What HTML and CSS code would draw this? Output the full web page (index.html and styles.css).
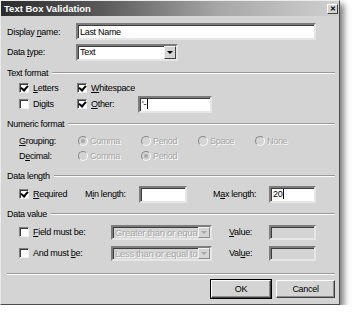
FILE: index.html
```html
<!DOCTYPE html>
<html lang="en">
  <head>
    <meta charset="UTF-8" />
    <title>Text Box Validation</title>
    <link rel="stylesheet" href="styles.css">
  </head>
  <body>
    <div class="dialog">
      <div class="titlebar">
        <span class="title">Text Box Validation</span>
        <span class="close">&#x2715;</span>
      </div>

      <div class="content">
        <div class="row r-name">
          <span class="lbl w-main">Display <u>n</u>ame:</span>
          <span class="field w-name">Last Name</span>
        </div>
        <div class="row r-type">
          <span class="lbl w-main">Data <u>t</u>ype:</span>
          <span class="field select w-type">Text<span class="arrow"></span></span>
        </div>

        <div class="group g-text"><span>Text format</span><span class="line"></span></div>
        <div class="row sub h16">
          <span class="opt w-c1"><span class="check on"></span><span><u>L</u>etters</span></span>
          <span class="opt"><span class="check on"></span><span><u>W</u>hitespace</span></span>
        </div>
        <div class="row sub h16">
          <span class="opt w-c1"><span class="check"></span><span>Di<u>g</u>its</span></span>
          <span class="opt w-other"><span class="check on"></span><span><u>O</u>ther:</span></span>
          <span class="field w-oth">'-<span class="caret"></span></span>
        </div>

        <div class="group g-num"><span>Numeric format</span><span class="line"></span></div>
        <div class="row sub h16 r-group">
          <span class="lbl w-rl"><u>G</u>rouping:</span>
          <span class="opt dis w-r1"><span class="radio on"></span><span>Comma</span></span>
          <span class="opt dis w-r2"><span class="radio"></span><span>Period</span></span>
          <span class="opt dis w-r2"><span class="radio"></span><span>Space</span></span>
          <span class="opt dis"><span class="radio"></span><span>None</span></span>
        </div>
        <div class="row sub h14">
          <span class="lbl w-rl">D<u>e</u>cimal:</span>
          <span class="opt dis w-r1"><span class="radio"></span><span>Comma</span></span>
          <span class="opt dis w-r2"><span class="radio on"></span><span>Period</span></span>
        </div>

        <div class="group g-len"><span>Data length</span><span class="line"></span></div>
        <div class="row sub h18 r-req">
          <span class="opt w-req"><span class="check on"></span><span><u>R</u>equired</span></span>
          <span class="lbl w-min">M<u>i</u>n length:</span>
          <span class="field w-minf"></span>
          <span class="lbl w-max">M<u>a</u>x length:</span>
          <span class="field w-small">20<span class="caret"></span></span>
        </div>

        <div class="group g-val"><span>Data value</span><span class="line"></span></div>
        <div class="row sub h18 r-field">
          <span class="opt w-fld"><span class="check"></span><span><u>F</u>ield must be:</span></span>
          <span class="field select off w-sel">Greater than or equal to<span class="arrow"></span></span>
          <span class="lbl w-value"><u>V</u>alue:</span>
          <span class="field off w-small"></span>
        </div>
        <div class="row sub h18 r-and">
          <span class="opt w-fld"><span class="check"></span><span>And must <u>b</u>e:</span></span>
          <span class="field select off w-sel">Less than or equal to<span class="arrow"></span></span>
          <span class="lbl w-value">Val<u>u</u>e:</span>
          <span class="field off w-small"></span>
        </div>

        <div class="separator"></div>

        <div class="buttons">
          <span class="btn default">OK</span>
          <span class="btn">Cancel</span>
        </div>
      </div>
    </div>
  </body>
</html>
```

FILE: styles.css
```css
  :root {
    --face: #d4d4d4;
    --shadow: #8c8c8c;
    --dark: #424242;
    --muted: #a6a6a6;
  }

  body {
    margin: 0;
    background: #fff;
    font-family: "Liberation Sans", Arial, sans-serif;
    font-size: 9px;
    letter-spacing: -0.3px;
    color: #000;
  }

  u {
    text-decoration: underline;
    text-underline-offset: 1px;
  }

  .dialog {
    width: 340px;
    height: 305px;
    box-sizing: border-box;
    background: var(--face);
    border: 1px solid;
    border-color: #ececec #4a4a4a #4a4a4a #ececec;
    box-shadow: 4px 4px 6px rgba(0, 0, 0, 0.5);
  }

  /* title bar */
  .titlebar {
    height: 15px;
    display: flex;
    align-items: center;
    justify-content: space-between;
    padding: 0 1px 0 3px;
    background: linear-gradient(to right, #2c2c2c, #5a5a5a 30%, #a8a8a8 65%, #d0d0d0);
  }

  .title {
    color: #fff;
    font-weight: bold;
    font-size: 9.5px;
    letter-spacing: 0;
  }

  .close {
    width: 11px;
    height: 10px;
    box-sizing: border-box;
    display: flex;
    align-items: center;
    justify-content: center;
    background: var(--face);
    border: 1px solid;
    border-color: #fff #444 #444 #fff;
    font-size: 7px;
    font-weight: bold;
    line-height: 1;
    letter-spacing: 0;
  }

  .content {
    padding: 0 4px 0 6px;
  }

  .row {
    display: flex;
    align-items: center;
  }
  .sub {
    padding-left: 12px;
  }
  .h14 { height: 14px; }
  .h16 { height: 16px; }
  .h18 { height: 18px; }

  .r-name { margin-top: 6px; height: 19px; }
  .r-type { margin-top: 1px; height: 20px; }
  .r-group { margin-top: 2px; }
  .r-req { margin-top: 2px; }
  .r-field { margin-top: 2px; }
  .r-and { margin-top: 3px; }

  /* group headings */
  .group {
    display: flex;
    align-items: center;
    height: 14px;
  }
  .group .line {
    flex: 1;
    margin-left: 4px;
    border-top: 1px solid #999;
    border-bottom: 1px solid #fff;
  }
  .g-text { margin-top: 4px; }
  .g-num { margin-top: 5px; }
  .g-len { margin-top: 6px; }
  .g-val { margin-top: 4px; }

  /* widths of the cells */
  .w-main { width: 69px; }
  .w-name { width: 240px; }
  .w-type { width: 102px; }
  .w-c1 { width: 58px; }
  .w-other { width: 61px; }
  .w-oth { width: 74px; }
  .w-rl { width: 59px; }
  .w-r1 { width: 63px; }
  .w-r2 { width: 57px; }
  .w-req { width: 66px; }
  .w-min { width: 54px; }
  .w-minf { width: 48px; }
  .w-max { width: 56px; margin-left: 26px; }
  .w-small { width: 47px; }
  .w-fld { width: 92px; }
  .w-sel { width: 101px; }
  .w-value { width: 40px; margin-left: 17px; }

  .lbl {
    flex: none;
    white-space: nowrap;
  }

  /* edit boxes */
  .field {
    flex: none;
    box-sizing: border-box;
    height: 17px;
    display: flex;
    align-items: center;
    position: relative;
    padding-left: 2px;
    background: #fff;
    border: 2px solid;
    border-color: #7c7c7c #e6e6e6 #e6e6e6 #7c7c7c;
    box-shadow: inset 1px 1px 0 #3c3c3c;
    white-space: nowrap;
    overflow: hidden;
  }
  .field.off {
    background: var(--face);
    color: var(--muted);
    text-shadow: 1px 1px 0 #fff;
    height: 15px;
    font-size: 9.5px;
  }

  .caret {
    display: inline-block;
    width: 1px;
    height: 10px;
    margin-left: 1px;
    background: #000;
  }

  .select {
    padding-right: 14px;
  }
  .arrow {
    position: absolute;
    top: 0;
    right: 0;
    bottom: 0;
    width: 12px;
    box-sizing: border-box;
    background: var(--face);
    border: 1px solid;
    border-color: #f2f2f2 #444 #444 #f2f2f2;
  }
  .arrow::after {
    content: "";
    position: absolute;
    left: 2px;
    top: 4px;
    border: 3px solid transparent;
    border-top: 3px solid #000;
    border-bottom: 0;
  }
  .off .arrow {
    border-color: #f2f2f2 #8c8c8c #8c8c8c #f2f2f2;
  }
  .off .arrow::after {
    top: 3px;
    border-top-color: var(--muted);
  }

  /* checkboxes and radios */
  .opt {
    flex: none;
    display: flex;
    align-items: center;
    white-space: nowrap;
  }
  .opt.dis {
    color: var(--muted);
    text-shadow: 1px 1px 0 #fff;
  }

  .check {
    width: 10px;
    height: 10px;
    box-sizing: border-box;
    margin-right: 4px;
    position: relative;
    background: #fff;
    border: 1px solid;
    border-color: #7c7c7c #f0f0f0 #f0f0f0 #7c7c7c;
    box-shadow: inset 1px 1px 0 #3c3c3c;
  }
  .check.on::after {
    content: "";
    position: absolute;
    left: 2px;
    top: 0;
    width: 3px;
    height: 5px;
    border: solid #000;
    border-width: 0 2px 2px 0;
    transform: rotate(40deg);
  }

  .radio {
    width: 10px;
    height: 10px;
    box-sizing: border-box;
    margin-right: 2px;
    position: relative;
    border-radius: 50%;
    background: var(--face);
    border: 1px solid;
    border-color: #8a8a8a #fafafa #fafafa #8a8a8a;
  }
  .radio.on::after {
    content: "";
    position: absolute;
    left: 2px;
    top: 2px;
    width: 4px;
    height: 4px;
    border-radius: 50%;
    background: var(--muted);
  }

  .separator {
    margin-top: 11px;
    border-top: 1px solid #999;
    border-bottom: 1px solid #fff;
  }

  .buttons {
    margin-top: 5px;
    display: flex;
    justify-content: flex-end;
    gap: 5px;
  }
  .btn {
    width: 59px;
    height: 18px;
    box-sizing: border-box;
    display: flex;
    align-items: center;
    justify-content: center;
    background: var(--face);
    border: 1px solid;
    border-color: #fff #404040 #404040 #fff;
    box-shadow: inset -1px -1px 0 #8c8c8c;
  }
  .btn.default {
    width: 60px;
    outline: 1px solid #000;
    outline-offset: 0;
  }
```
